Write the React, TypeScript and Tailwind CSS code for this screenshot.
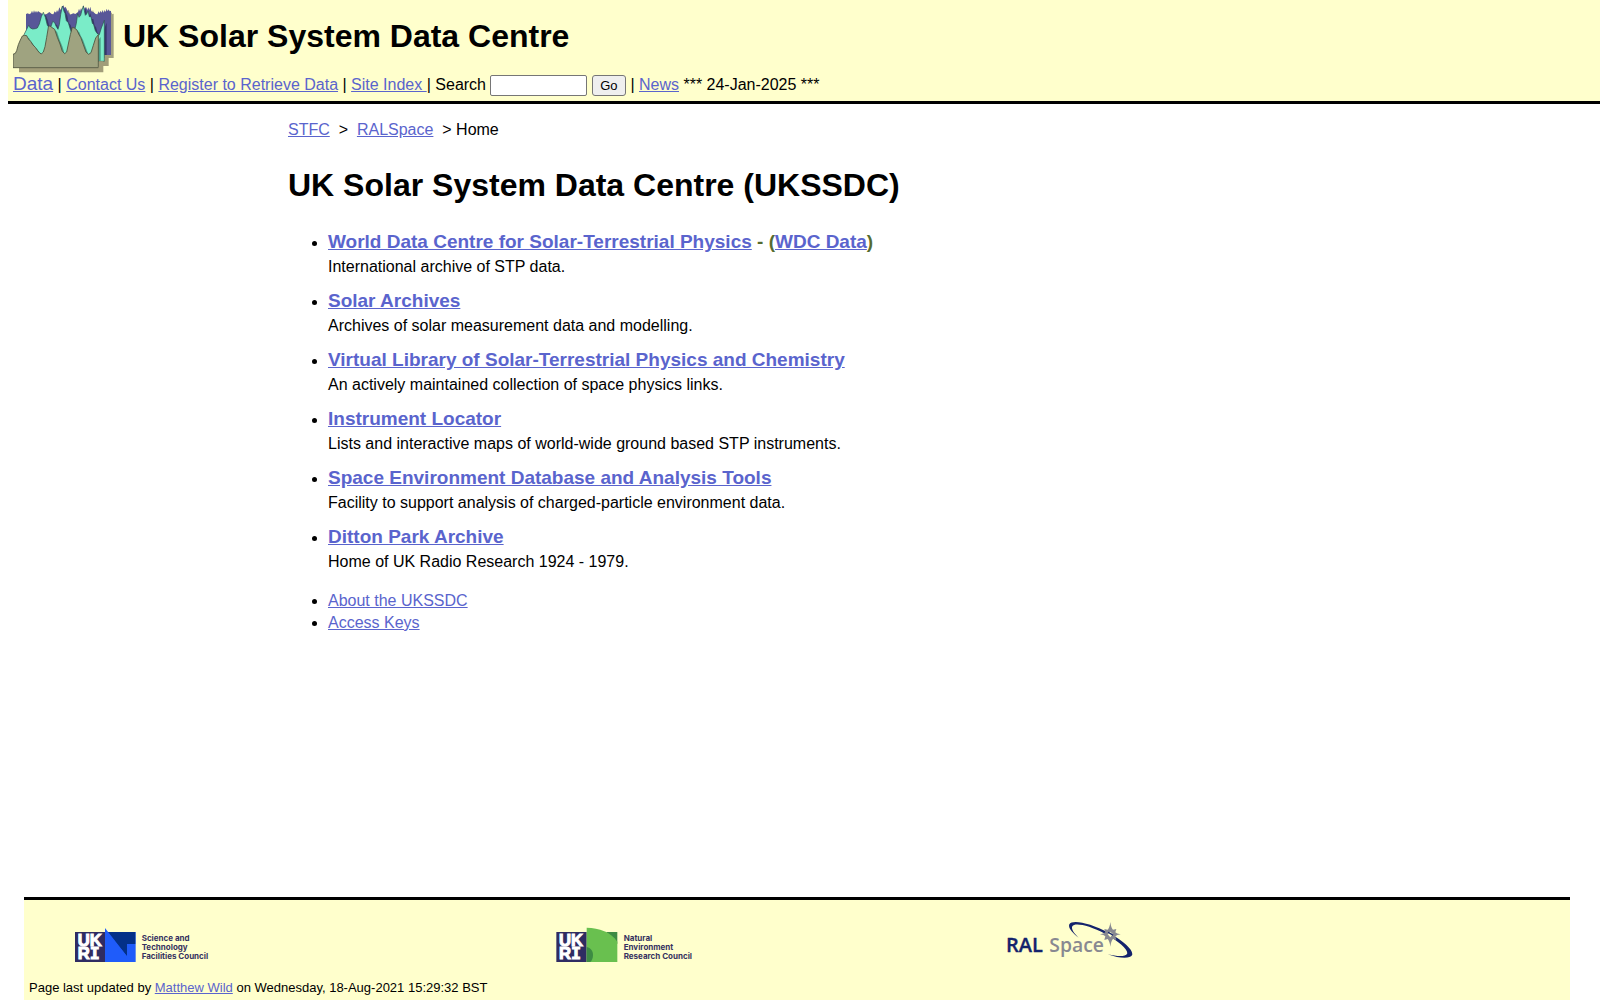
import type { ReactNode } from 'react';

const archives = [
  {
    title: 'World Data Centre for Solar-Terrestrial Physics',
    text: 'International archive of STP data.',
    extra: 'WDC Data',
  },
  { title: 'Solar Archives', text: 'Archives of solar measurement data and modelling.' },
  {
    title: 'Virtual Library of Solar-Terrestrial Physics and Chemistry',
    text: 'An actively maintained collection of space physics links.',
  },
  {
    title: 'Instrument Locator',
    text: 'Lists and interactive maps of world-wide ground based STP instruments.',
  },
  {
    title: 'Space Environment Database and Analysis Tools',
    text: 'Facility to support analysis of charged-particle environment data.',
  },
  { title: 'Ditton Park Archive', text: 'Home of UK Radio Research 1924 - 1979.' },
];

function Link({ children }: { children: ReactNode }) {
  return (
    <a href="#" className="text-[#5a64cd] underline">
      {children}
    </a>
  );
}

// Three stacked ionosonde-style plots, each with a drop shadow
function SiteLogo() {
  const back =
    'M78 165V42L84 40 87 43 93 40 96 32 99 40 102 31 105 38 108 32 111 38 114 33 118 36 124 40 130 44 140 42 148 36 155 42 160 43 164 34 168 38 171 30 174 36 178 22 182 30 186 20 190 16 194 24 197 20 200 28 204 36 210 44 220 40 226 42 234 36 237 26 240 34 243 24 247 32 250 15 254 26 258 20 262 30 265 22 268 30 271 20 274 34 280 36 287 42 292 43 296 34 299 40 302 32 305 38 308 30 311 38 314 30 317 36 320 26 323 34 326 28 329 34 333 32V165z';
  const middle =
    'M62 184L72 104 80 88 86 76 91 84 98 87 106 86 112 84 118 72 124 50 130 37 136 52 142 76 150 86 155 74 158 64 164 68 168 78 174 88 178 74 182 44 187 18 192 34 195 40 199 62 205 68 211 88 217 104 225 86 229 70 233 41 237 52 242 46 246 30 250 18 256 46 260 42 264 33 268 50 273 50 277 70 281 74 286 92 292 101 298 104 304 84 313 61V184z';
  const front =
    'M39 203V163L46 160 50 152 55 134 61 120 67 108 73 106 80 107 86 118 92 124 98 134 106 142 113 152 120 160 125 161 130 156 135 140 140 112 145 82 149 77 155 82 164 88 172 112 180 132 187 154 194 161 200 156 205 132 211 104 217 82 223 84 231 90 236 102 242 112 250 134 258 156 266 163 273 158 280 136 287 114 295 104V203z';
  return (
    <svg viewBox="39 15 303 207" className="h-[69px] w-[101px] shrink-0" aria-hidden="true">
      <clipPath id="backPlot">
        <path d={back} />
      </clipPath>
      <clipPath id="middlePlot">
        <path d={middle} />
      </clipPath>
      <path d={back} fill="#a3a17f" transform="translate(8 9)" />
      <path d={back} fill="#585798" />
      <g clipPath="url(#backPlot)">
        <path d={middle} fill="#37376a" transform="translate(7 7)" />
      </g>
      <path d="M313 165h13v33h-30v-14h17z" fill="#a19d79" />
      <path d={middle} fill="#7aecc8" stroke="#284f4c" strokeWidth="2" />
      <g clipPath="url(#middlePlot)">
        <path d={front} fill="#4c9f8a" transform="translate(7 7)" />
      </g>
      <path d="M57 203H296V184H310V217H57z" fill="#a19d79" />
      <path d={front} fill="#9fa380" stroke="#4b4e3b" strokeWidth="2.5" />
    </svg>
  );
}

function UkriMark({ x }: { x: number }) {
  return (
    <g>
      <path d={`M${x} 66h91v90h-91z`} fill="#2f2c62" />
      <g fill="#fff" stroke="#fff" strokeWidth="3" fontFamily="'Liberation Sans', Arial, sans-serif" fontWeight="700" fontSize="50">
        <text x={x + 8} y="109">UK</text>
        <text x={x + 8} y="146">
          R<tspan fontFamily="'DejaVu Sans Mono', monospace">I</tspan>
        </text>
      </g>
    </g>
  );
}

function CouncilName({ x, lines }: { x: number; lines: string[] }) {
  return (
    <g fill="#35315f" fontFamily="Inter, 'Open Sans', sans-serif" fontWeight="700" fontSize="24">
      {lines.map((line, i) => (
        <text key={line} x={x} y={94 + i * 26}>
          {line}
        </text>
      ))}
    </g>
  );
}

function StfcLogo() {
  return (
    <svg viewBox="45 33 402 126" className="h-[42px] w-[134px]">
      <UkriMark x={45} />
      <path d="M136 66h91v90h-91z" fill="#1f5cfa" />
      <path d="M142 66h84v36h-25v37z" fill="#033088" />
      <path d="M135 54L201 139V156H135z" fill="#1f5cfa" />
      <CouncilName x={245} lines={['Science and', 'Technology', 'Facilities Council']} />
    </svg>
  );
}

function NercLogo() {
  return (
    <svg viewBox="48 33 408 126" className="h-[42px] w-[136px]">
      <UkriMark x={49} />
      <path d="M198 66h34v36z" fill="#3d8b43" />
      <path d="M140 53c38 1 72 12 92 42v61h-92z" fill="#69c04f" />
      <path d="M140 111c13 3 19 12 19 24 0 10-3 16-8 21h-11z" fill="#3d8b43" />
      <CouncilName x={251} lines={['Natural', 'Environment', 'Research Council']} />
    </svg>
  );
}

function RalLogo() {
  return (
    <svg viewBox="51 48 381 114" className="h-[38px] w-[127px]">
      <g fontFamily="'Open Sans', 'Noto Sans', sans-serif" fontWeight="600">
        <text x="48" y="140" fill="#14236c" stroke="#14236c" fontSize="60">RAL</text>
        <text x="178" y="140" fill="#888991" fontSize="58">Space</text>
      </g>
      <path
        d="M266 98c-22-17-32-31-28-40 8-16 62-5 119 26 49 27 75 54 69 67-5 10-35 11-73-3 33 8 54 6 58-1 6-11-22-37-66-61-48-25-91-34-98-22-4 7 4 20 19 34z"
        fill="#14236c"
      />
      <path
        d="M361 51Q363 68 369 74L379 72 376 82Q380 87 392 88 380 90 376 94L379 105 369 102Q363 108 361 125 359 108 353 102L343 105 346 94Q342 90 330 88 342 87 346 82L343 72 353 74Q359 68 361 51z"
        fill="#888991"
      />
      <path d="M361 80L369 88 361 97 353 88z" fill="#ffffcc" />
      <path d="M354 82q8 3 15 9" stroke="#14236c" strokeWidth="4" fill="none" />
    </svg>
  );
}

export default function App() {
  return (
    <div className="flex min-h-screen flex-col bg-white font-['Liberation_Sans',Arial,sans-serif] text-base leading-[22px] text-black">
      {/* Header */}
      <header className="ml-2 border-b-[3px] border-black bg-[#ffffcc] p-[5px]">
        <div className="flex gap-[9px]">
          <SiteLogo />
          <div className="pt-[13px] text-[32px] leading-9 font-bold">UK Solar System Data Centre</div>
        </div>
        <form onSubmit={(e) => e.preventDefault()} className="leading-[19px]">
          <a href="#" className="text-[19px] text-[#5a64cd] underline">
            Data
          </a>{' '}
          | <Link>Contact Us</Link> | <Link>Register to Retrieve Data</Link> |{' '}
          <Link>Site Index </Link>| <label htmlFor="search">Search</label>{' '}
          <input
            id="search"
            type="text"
            className="h-[21px] w-[97px] rounded-xs border border-[#767676] bg-white px-1 text-[13px]"
          />{' '}
          <button
            type="submit"
            className="h-[21px] w-[34px] rounded-[3px] border border-[#767676] bg-[#efefef] text-[13px] leading-[19px]"
          >
            Go
          </button>{' '}
          | <Link>News</Link> *** 24-Jan-2025 ***
        </form>
      </header>

      {/* Content */}
      <main className="grow pt-[15px] pl-72">
        <nav>
          <Link>STFC</Link>&nbsp; &gt; &nbsp;<Link>RALSpace</Link>&nbsp; &gt; Home
        </nav>
        <h1 className="mt-6 text-[32px] leading-10 font-bold">UK Solar System Data Centre (UKSSDC)</h1>
        <ul className="mt-[23px] list-disc space-y-[9px] pl-10">
          {archives.map((item) => (
            <li key={item.title}>
              <h2 className="inline-block pb-px text-[19px] leading-[27px] font-bold text-[#556b2f]">
                <Link>{item.title}</Link>
                {item.extra && (
                  <>
                    {' '}
                    - (<Link>{item.extra}</Link>)
                  </>
                )}
              </h2>
              <p>{item.text}</p>
            </li>
          ))}
        </ul>
        <ul className="mt-[17px] list-disc pl-10">
          <li>
            <Link>About the UKSSDC</Link>
          </li>
          <li>
            <Link>Access Keys</Link>
          </li>
        </ul>
      </main>

      {/* Footer */}
      <footer className="mr-[30px] ml-6 border-t-[3px] border-black bg-[#ffffcc] pt-[21px]">
        <div className="grid grid-cols-[481fr_451fr_563fr] items-start pl-[51px]">
          <a href="#" aria-label="STFC">
            <StfcLogo />
          </a>
          <a href="#" aria-label="NERC">
            <NercLogo />
          </a>
          <a href="#" aria-label="RAL Space">
            <RalLogo />
          </a>
        </div>
        <p className="mt-[15px] px-[5px] pb-0.5 text-[13px] leading-5">
          Page last updated by <Link>Matthew Wild</Link> on Wednesday, 18-Aug-2021 15:29:32 BST
        </p>
      </footer>
    </div>
  );
}
